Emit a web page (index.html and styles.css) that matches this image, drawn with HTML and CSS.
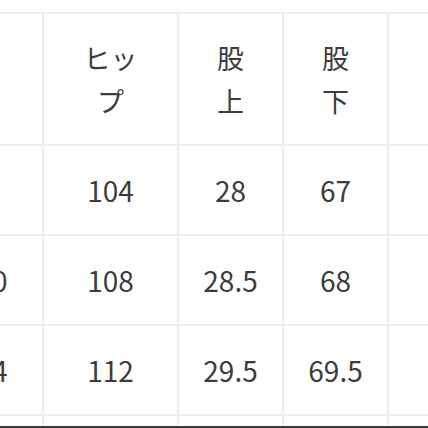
FILE: index.html
```html
<!DOCTYPE html>
<html lang="ja">
<head>
<meta charset="utf-8">
<link rel="stylesheet" href="styles.css">
</head>
<body>
<div class="page">
  <div class="viewport">
    <div class="table">
      <div class="cell head"></div>
      <div class="cell head">ヒッ<br>プ</div>
      <div class="cell head">股<br>上</div>
      <div class="cell head">股<br>下</div>
      <div class="cell head"></div>

      <div class="cell"></div>
      <div class="cell">104</div>
      <div class="cell">28</div>
      <div class="cell">67</div>
      <div class="cell"></div>

      <div class="cell">70</div>
      <div class="cell">108</div>
      <div class="cell">28.5</div>
      <div class="cell">68</div>
      <div class="cell"></div>

      <div class="cell">74</div>
      <div class="cell">112</div>
      <div class="cell">29.5</div>
      <div class="cell">69.5</div>
      <div class="cell"></div>

      <div class="cell"></div>
      <div class="cell"></div>
      <div class="cell"></div>
      <div class="cell"></div>
      <div class="cell"></div>
    </div>
  </div>
  <div class="bottom-bar"></div>
</div>
</body>
</html>
```

FILE: styles.css
```css
html, body {
  margin: 0;
  padding: 0;
  background: #ffffff;
}

body {
  width: 428px;
  height: 428px;
  overflow: hidden;
  font-family: "Noto Sans CJK JP", "Noto Sans", sans-serif;
  color: #3c3c3c;
}

.page {
  width: 428px;
  height: 428px;
  display: flex;
  flex-direction: column;
}

.viewport {
  flex: 1;
  overflow: hidden;
  padding-top: 12px;
}

.table {
  margin-left: -58px;
  display: grid;
  grid-template-columns: 100px 133px 103px 103px 110px;
  grid-template-rows: 130px 88px 88px 88px 40px;
  gap: 2px;
  padding: 2px;
  padding-left: 0;
  background: #ededed;
  width: max-content;
}

.cell {
  background: #ffffff;
  display: flex;
  align-items: center;
  justify-content: center;
  text-align: center;
  font-size: 28px;
  line-height: 1;
}

.head {
  line-height: 43px;
  font-size: 27px;
}

.bottom-bar {
  height: 2px;
  background: #3c3c3c;
}
```
